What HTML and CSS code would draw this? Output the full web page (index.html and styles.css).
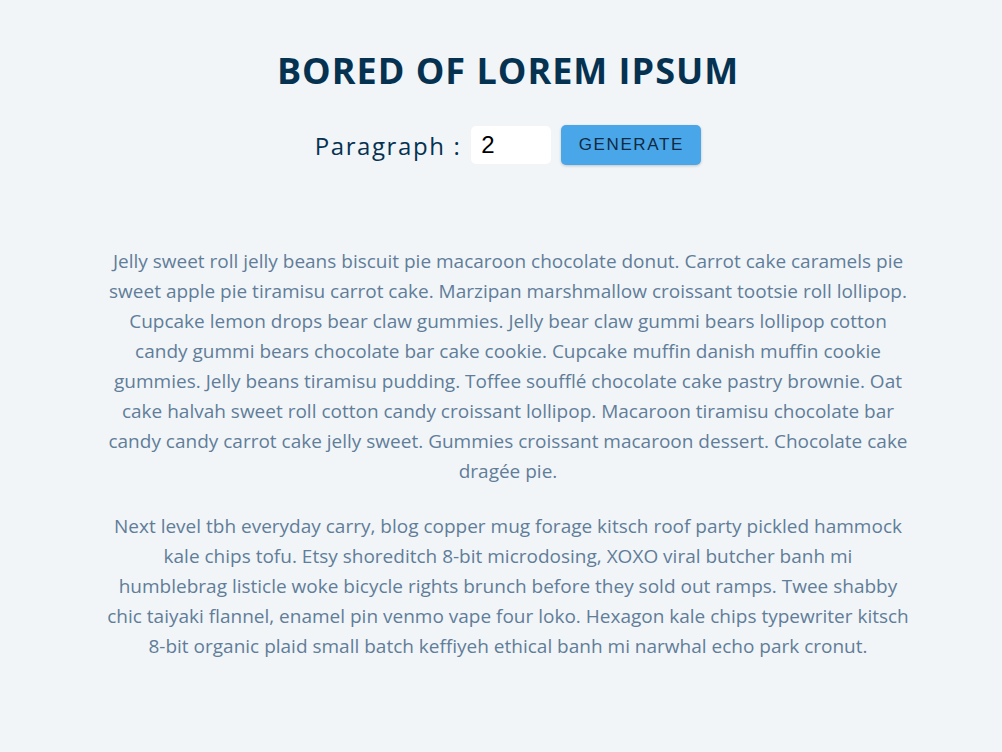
FILE: index.html
```html
<!DOCTYPE html>
<html lang="en">
<head>
<meta charset="utf-8">
<title>Lorem Ipsum Generator</title>
<link rel="stylesheet" href="styles.css">
</head>
<body>
<section class="section-center">
  <h3 class="title">bored of lorem ipsum</h3>
  <form class="lorem-form">
    <label for="amount">paragraph :</label>
    <input type="number" id="amount" name="amount" value="2">
    <button type="button" class="btn">generate</button>
  </form>
  <article class="lorem-text">
    <p>Jelly sweet roll jelly beans biscuit pie macaroon chocolate donut. Carrot cake caramels pie sweet apple pie tiramisu carrot cake. Marzipan marshmallow croissant tootsie roll lollipop. Cupcake lemon drops bear claw gummies. Jelly bear claw gummi bears lollipop cotton candy gummi bears chocolate bar cake cookie. Cupcake muffin danish muffin cookie gummies. Jelly beans tiramisu pudding. Toffee soufflé chocolate cake pastry brownie. Oat cake halvah sweet roll cotton candy croissant lollipop. Macaroon tiramisu chocolate bar candy candy carrot cake jelly sweet. Gummies croissant macaroon dessert. Chocolate cake dragée pie.</p>
    <p>Next level tbh everyday carry, blog copper mug forage kitsch roof party pickled hammock kale chips tofu. Etsy shoreditch 8-bit microdosing, XOXO viral butcher banh mi humblebrag listicle woke bicycle rights brunch before they sold out ramps. Twee shabby chic taiyaki flannel, enamel pin venmo vape four loko. Hexagon kale chips typewriter kitsch 8-bit organic plaid small batch keffiyeh ethical banh mi narwhal echo park cronut.</p>
  </article>
</section>
</body>
</html>
```
FILE: styles.css
```css
* { box-sizing: border-box; margin: 0; padding: 0; }
html, body { height: 100%; }
body {
  background: #f1f5f8;
  font-family: "Open Sans", "Noto Sans", sans-serif;
  color: #102a42;
  padding-left: 14px;
}
.section-center {
  width: 802px;
  margin: 0 auto;
  padding-top: 51px;
  text-align: center;
}
.title {
  font-family: "Open Sans", sans-serif;
  font-weight: 700;
  font-size: 36px;
  line-height: 40px;
  letter-spacing: 1px;
  text-transform: uppercase;
  color: #063251;
}
.lorem-form {
  display: flex;
  justify-content: center;
  align-items: center;
  margin-top: 34px;
  margin-bottom: 81px;
}
.lorem-form label {
  font-size: 24px;
  letter-spacing: 1.6px;
  text-transform: capitalize;
  color: #063251;
}
.lorem-form input {
  width: 80px;
  height: 38px;
  padding: 4px 10px;
  margin: 0 10px;
  border: none;
  border-radius: 5px;
  background: #fff;
  font-family: "Liberation Sans", Arial, sans-serif;
  font-size: 24px;
  color: #000;
  -moz-appearance: textfield;
}
.lorem-form input::-webkit-inner-spin-button,
.lorem-form input::-webkit-outer-spin-button { -webkit-appearance: none; margin: 0; }
.btn {
  width: 140px;
  height: 40px;
  background: #49a6e9;
  color: #102a42;
  border: none;
  border-radius: 5px;
  font-family: "Liberation Sans", Arial, sans-serif;
  font-size: 17px;
  letter-spacing: 1.6px;
  text-transform: uppercase;
  box-shadow: 0 1px 3px rgba(0,0,0,0.2);
  cursor: pointer;
}
.lorem-text p {
  font-size: 19px;
  line-height: 30px;
  color: #617d98;
  margin-bottom: 25px;
}
```
